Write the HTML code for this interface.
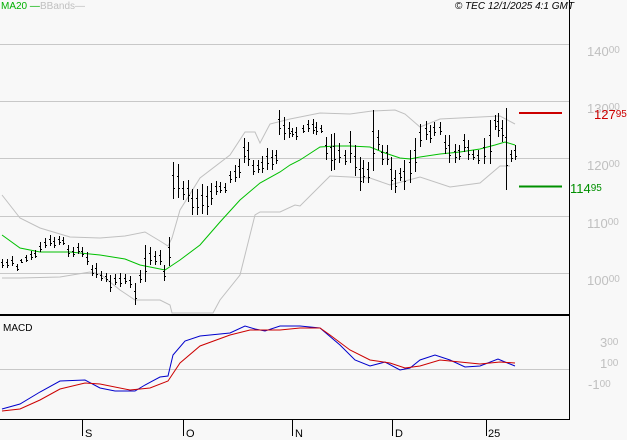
<!DOCTYPE html>
<html><head><meta charset="utf-8"><style>
html,body{margin:0;padding:0;background:#f8f8f8;}
svg{display:block;font-family:"Liberation Sans",sans-serif;}
</style></head><body>
<svg width="627" height="440" viewBox="0 0 627 440" xmlns="http://www.w3.org/2000/svg">
<rect width="627" height="440" fill="#f8f8f8"/>
<g stroke="#c8c8c8" stroke-width="1">
<line x1="0" y1="44.5" x2="569" y2="44.5"/>
<line x1="0" y1="101.5" x2="569" y2="101.5"/>
<line x1="0" y1="158.5" x2="569" y2="158.5"/>
<line x1="0" y1="216.5" x2="569" y2="216.5"/>
<line x1="0" y1="273.5" x2="569" y2="273.5"/>
<line x1="0" y1="369.5" x2="569" y2="369.5"/>
</g>
<g fill="none" stroke="#c0c0c0" stroke-width="1">
<polyline points="2,195 20,218 40,228 70,237 100,238 125,236 145,232 160,241 168,246 172,238 180,210 200,178 230,155 245,132 255,132 260,143 270,124 290,119 320,113 350,114 372,111 395,110 405,114 420,127 440,119 480,117 500,116 515,124"/>
<polyline points="2,278 20,278 60,277 90,272 100,274 120,290 135,300 160,300 170,305 172,313 213,313 220,300 240,275 255,215 260,212 280,212 295,205 300,206 330,176 370,178 390,185 420,177 450,187 480,183 500,166 510,166"/>
</g>
<polyline fill="none" stroke="#00c000" stroke-width="1" points="2,235 20,248 40,252 70,252 100,255 125,259 140,265 150,267 165,270 180,260 200,245 220,222 240,200 260,183 280,172 290,165 300,160 320,147 335,146 350,146 370,147 385,153 400,158 410,159 420,157 440,154 460,152 480,149 495,145 505,142 515,145"/>
<g stroke="#000" stroke-width="1" id="bars"></g>
<line x1="519" y1="113" x2="562" y2="113" stroke="#cc0000" stroke-width="2"/>
<line x1="519" y1="186.5" x2="562" y2="186.5" stroke="#009000" stroke-width="2"/>
<line x1="569.5" y1="0" x2="569.5" y2="420" stroke="#000" stroke-width="1"/>
<rect x="0" y="314" width="570" height="2" fill="#000"/>
<line x1="0" y1="419.5" x2="570" y2="419.5" stroke="#000" stroke-width="1"/>
<g stroke="#000" stroke-width="1">
<line x1="82.5" y1="420" x2="82.5" y2="436"/>
<line x1="183.5" y1="420" x2="183.5" y2="436"/>
<line x1="292.5" y1="420" x2="292.5" y2="436"/>
<line x1="392.5" y1="420" x2="392.5" y2="436"/>
<line x1="486.5" y1="420" x2="486.5" y2="436"/>
</g>
<g font-size="11" fill="#000">
<text x="85" y="437">S</text><text x="186" y="437">O</text><text x="295" y="437">N</text><text x="395" y="437">D</text><text x="488" y="437">25</text>
</g>
<g fill="none" stroke-width="1">
<polyline stroke="#0000cc" points="2,409 20,404 40,392 60,381 85,380 100,388 115,391 135,391 145,385 160,377 168,376 173,355 185,341 200,336 230,333 245,326 255,329 265,331 280,326 300,326 320,328 340,345 355,360 370,366 385,362 400,370 410,368 420,360 435,355 450,360 465,367 480,366 498,359 505,362 515,366"/>
<polyline stroke="#cc0000" points="2,411 20,409 40,400 60,389 85,383 100,384 130,390 150,388 168,381 180,363 200,346 230,335 250,330 280,330 300,328 320,328 330,335 350,350 370,360 390,363 405,368 420,366 440,360 460,362 480,364 500,362 515,363"/>
</g>
<text x="3" y="331" font-size="10" fill="#000">MACD</text>
<text x="1" y="9" font-size="10" fill="#00b000">MA20 —</text>
<text x="40" y="9" font-size="10" fill="#c0c0c0">BBands—</text>
<text x="574" y="9" font-size="10" font-style="italic" fill="#000" text-anchor="end">© TEC 12/1/2025 4:1 GMT</text>
<g font-size="13" fill="#c0c0c0">
<text x="587" y="56">140<tspan font-size="10" dy="-3">00</tspan></text>
<text x="587" y="113">130<tspan font-size="10" dy="-3">00</tspan></text>
<text x="587" y="170">120<tspan font-size="10" dy="-3">00</tspan></text>
<text x="587" y="228">110<tspan font-size="10" dy="-3">00</tspan></text>
<text x="587" y="285">100<tspan font-size="10" dy="-3">00</tspan></text>
<text x="600" y="347">3<tspan font-size="10" dy="-2">00</tspan></text>
<text x="600" y="368">1<tspan font-size="10" dy="-2">00</tspan></text>
<text x="588" y="389">-1<tspan font-size="10" dy="-2">00</tspan></text>
</g>
<text x="594" y="119" font-size="13" fill="#cc0000">127<tspan font-size="10" dy="-2">95</tspan></text>
<text x="570" y="193" font-size="13" fill="#009000">114<tspan font-size="10" dy="-2">95</tspan></text>
</svg>
<script>
var b=[[2,259,268],[7,259,268],[12,256,266],[17,264,271],[21,259,263],[26,255,262],[31,251,260],[35,250,258],[40,242,252],[45,238,248],[50,235,246],[54,237,248],[59,236,245],[63,237,245],[68,245,257],[73,247,257],[78,243,254],[82,247,257],[87,252,265],[92,265,276],[96,263,278],[101,271,281],[106,273,282],[110,275,292],[115,274,285],[120,273,287],[125,274,284],[130,276,288],[135,283,305],[140,270,283],[145,245,282],[150,247,265],[155,251,265],[160,250,265],[164,265,281],[169,237,266],[173,162,199],[178,164,198],[183,181,200],[188,180,202],[192,189,215],[197,189,215],[202,184,214],[207,186,215],[211,183,205],[216,181,195],[220,182,193],[225,183,193],[230,171,183],[235,165,182],[239,159,178],[244,138,163],[248,142,166],[253,160,175],[258,160,173],[262,156,173],[267,148,170],[272,150,170],[276,150,164],[279,110,135],[284,117,140],[289,122,138],[292,128,137],[296,127,140],[303,125,133],[308,120,132],[313,119,134],[316,122,135],[321,125,133],[326,137,160],[331,134,171],[334,133,170],[339,143,163],[345,150,165],[350,131,163],[355,145,176],[360,157,191],[363,160,183],[368,162,183],[373,110,171],[378,130,150],[382,145,165],[387,145,165],[391,157,190],[395,170,193],[400,168,181],[404,160,190],[410,150,183],[415,138,172],[420,124,147],[426,121,140],[430,125,143],[434,122,136],[440,122,135],[445,135,154],[449,135,163],[455,144,163],[459,145,160],[464,134,152],[468,140,160],[473,150,160],[478,150,164],[484,138,164],[490,120,164],[495,115,130],[498,113,137],[502,120,142],[506,108,190],[511,150,162],[515,145,160]];
var g=document.getElementById('bars'),s='';
b.forEach(function(a){var x=a[0]+0.5,m1=Math.round(a[1]+(a[2]-a[1])*0.35)+0.5,m2=Math.round(a[1]+(a[2]-a[1])*0.7)+0.5;
s+='<line x1="'+x+'" y1="'+a[1]+'" x2="'+x+'" y2="'+a[2]+'"/>';
s+='<line x1="'+(x-1.5)+'" y1="'+m1+'" x2="'+x+'" y2="'+m1+'"/>';
s+='<line x1="'+x+'" y1="'+m2+'" x2="'+(x+1.5)+'" y2="'+m2+'"/>';});
g.innerHTML=s;
</script>
</body></html>
